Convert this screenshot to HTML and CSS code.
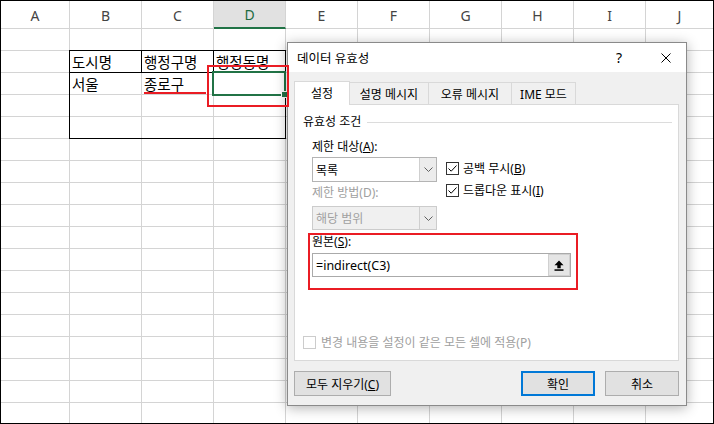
FILE: index.html
```html
<!DOCTYPE html>
<html lang="ko">
<head>
  <meta charset="UTF-8" />
  <title>데이터 유효성</title>
  <link rel="stylesheet" href="styles.css">
</head>
<body>
  <div class="screen">
    <div class="sheet">
      <div class="col-heads">
        <div class="col-head">A</div>
        <div class="col-head">B</div>
        <div class="col-head">C</div>
        <div class="col-head active">D</div>
        <div class="col-head">E</div>
        <div class="col-head">F</div>
        <div class="col-head">G</div>
        <div class="col-head">H</div>
        <div class="col-head">I</div>
        <div class="col-head">J</div>
      </div>
      <div class="cells">
        <div class="tbl">
          <div class="tc th">도시명</div>
          <div class="tc th">행정구명</div>
          <div class="tc th last">행정동명</div>
          <div class="tc">서울</div>
          <div class="tc">종로구</div>
          <div class="tc"></div>
        </div>
      </div>
    </div>

    <div class="cell-cursor"><span class="fill-handle"></span></div>

    <div class="dialog">
      <div class="titlebar">
        <span class="title">데이터 유효성</span>
        <span class="help">?</span>
        <svg class="close" width="10" height="10" viewBox="0 0 10 10">
          <path d="M0.5 0.5 L9.5 9.5 M9.5 0.5 L0.5 9.5" stroke="#000" stroke-width="1" fill="none"/>
        </svg>
      </div>
      <div class="dialog-body">
        <div class="tabs">
          <div class="tab selected">설정</div>
          <div class="tab tab-w79">설명 메시지</div>
          <div class="tab tab-w83">오류 메시지</div>
          <div class="tab tab-w64">IME 모드</div>
        </div>
        <div class="panel">
          <div class="group">
            <span>유효성 조건</span>
            <span class="group-line"></span>
          </div>

          <div class="fields">
            <div class="col-left">
              <div class="label">제한 대상(<u>A</u>):</div>
              <div class="select sel-allow">
                <span class="select-value">목록</span>
                <span class="select-arrow">
                  <svg width="9" height="5" viewBox="0 0 9 5"><path d="M0.5 0.5 L4.5 4.5 L8.5 0.5" stroke="#606060" fill="none"/></svg>
                </span>
              </div>
              <div class="label disabled lbl-data">제한 방법(D):</div>
              <div class="select disabled sel-data">
                <span class="select-value">해당 범위</span>
                <span class="select-arrow">
                  <svg width="9" height="5" viewBox="0 0 9 5"><path d="M0.5 0.5 L4.5 4.5 L8.5 0.5" stroke="#606060" fill="none"/></svg>
                </span>
              </div>
            </div>
            <div class="col-right">
              <div class="check-row">
                <span class="checkbox">
                  <svg width="11" height="11" viewBox="0 0 11 11"><path d="M1.5 5.5 L4.2 8.2 L9.5 2.5" stroke="#000" fill="none"/></svg>
                </span>
                <span>공백 무시(<u>B</u>)</span>
              </div>
              <div class="check-row">
                <span class="checkbox">
                  <svg width="11" height="11" viewBox="0 0 11 11"><path d="M1.5 5.5 L4.2 8.2 L9.5 2.5" stroke="#000" fill="none"/></svg>
                </span>
                <span>드롭다운 표시(<u>I</u>)</span>
              </div>
            </div>
          </div>

          <div class="source">
            <div class="label">원본(<u>S</u>):</div>
            <div class="source-input">
              <span class="source-value">=indirect(C3)</span>
              <span class="ref-btn">
                <svg width="10" height="11" viewBox="0 0 10 11">
                  <path d="M5 0.5 L9.5 5.3 L6.7 5.3 L6.7 8.3 L3.3 8.3 L3.3 5.3 L0.5 5.3 Z" fill="#000"/>
                  <rect x="0.5" y="9.3" width="9" height="1.5" fill="#000"/>
                </svg>
              </span>
            </div>
          </div>

          <div class="apply-row">
            <span class="checkbox off"></span>
            <span>변경 내용을 설정이 같은 모든 셀에 적용(P)</span>
          </div>
        </div>
        <div class="actions">
          <button type="button" class="btn btn-clear">모두 지우기(<u>C</u>)</button>
          <button type="button" class="btn btn-ok">확인</button>
          <button type="button" class="btn btn-cancel">취소</button>
        </div>
      </div>
    </div>

    <!-- red annotations -->
    <div class="mark mark-cell"></div>
    <div class="mark-underline"></div>
    <div class="mark mark-source"></div>
  </div>
</body>
</html>
```

FILE: styles.css
```css
* {
  box-sizing: border-box;
}
body {
  margin: 0;
  background: #fff;
}
.screen {
  position: relative;
  width: 714px;
  height: 424px;
  overflow: hidden;
}
.sheet {
  width: 714px;
  height: 424px;
  border: 1px solid #000;
  display: flex;
  flex-direction: column;
  overflow: hidden;
}
.col-heads {
  display: grid;
  grid-template-columns: 69px repeat(8, 72px) 1fr;
  height: 28px;
  flex: none;
}
.col-head {
  border-right: 1px solid #d4d4d4;
  border-bottom: 1px solid #d4d4d4;
  font-family: "Noto Sans", sans-serif;
  font-size: 14px;
  color: #444;
  display: flex;
  align-items: center;
  justify-content: center;
  padding-top: 1px;
}
.col-head:last-child {
  border-right: none;
}
.col-head.active {
  background: #e1e1e1;
  border-bottom: 2px solid #217346;
  color: #1d6b40;
}
.cells {
  flex: 1;
  display: grid;
  grid-template-columns: 69px repeat(8, 72px) 1fr;
  grid-template-rows: repeat(18, 22px);
  background-image:
    linear-gradient(to left, #d4d4d4 1px, transparent 1px),
    linear-gradient(to top, #d4d4d4 1px, transparent 1px);
  background-size: 72px 100%, 100% 22px;
  background-position: 69px 0, 0 0;
}
.tbl {
  grid-column: 2 / 5;
  grid-row: 2 / 6;
  margin: -1px 0 0 -1px;
  border: 1px solid #000;
  display: grid;
  grid-template-columns: 72px 72px 1fr;
  grid-template-rows: 22px 22px 22px 1fr;
  font-family: "Noto Sans CJK KR", sans-serif;
  font-size: 14.5px;
  color: #000;
}
.tc {
  padding-left: 2px;
  line-height: 21px;
  white-space: nowrap;
  overflow: visible;
}
.tc.th {
  border-bottom: 1px solid #000;
  border-right: 1px solid #000;
}
.tc.th.last {
  border-right: none;
}
.cell-cursor {
  position: absolute;
  left: 212px;
  top: 71px;
  width: 74px;
  height: 25px;
  border: 2px solid #217346;
}
.fill-handle {
  position: absolute;
  right: -4px;
  bottom: -4px;
  width: 7px;
  height: 7px;
  background: #217346;
  border: 1px solid #fff;
}

/* dialog */
.dialog {
  position: absolute;
  left: 287px;
  top: 42px;
  width: 400px;
  height: 364px;
  border: 1px solid #8a8a8a;
  background: #f0f0f0;
  box-shadow: 0 2px 12px rgba(0,0,0,0.3);
  display: flex;
  flex-direction: column;
  font-family: "Noto Sans", "Noto Sans CJK KR", sans-serif;
  font-size: 12px;
  color: #000;
}
.titlebar {
  height: 29px;
  flex: none;
  background: #fff;
  display: flex;
  align-items: center;
  padding-left: 9px;
}
.title {
  font-size: 12.5px;
}
.help {
  margin-left: auto;
  width: 12px;
  text-align: center;
  font-size: 14px;
  margin-right: 36px;
}
.close {
  margin-right: 15px;
}
.dialog-body {
  flex: 1;
  display: flex;
  flex-direction: column;
  padding: 9px 7px 9px 6px;
}
.tabs {
  display: flex;
  align-items: flex-end;
  height: 23px;
  flex: none;
}
.tab {
  height: 22px;
  border-top: 1px solid #d9d9d9;
  border-right: 1px solid #d9d9d9;
  display: flex;
  align-items: center;
  justify-content: center;
  background: #f0f0f0;
}
.tab.selected {
  width: 56px;
  height: 24px;
  margin-bottom: -1px;
  background: #fff;
  border: 1px solid #d9d9d9;
  border-bottom: none;
  position: relative;
  z-index: 1;
  padding-bottom: 1px;
}
.tab-w79 { width: 79px; }
.tab-w83 { width: 83px; }
.tab-w64 { width: 64px; }
.panel {
  height: 257px;
  flex: none;
  background: #fff;
  border: 1px solid #d9d9d9;
  display: flex;
  flex-direction: column;
}
.group {
  margin-top: 9px;
  height: 16px;
  line-height: 16px;
  padding-left: 8px;
  padding-right: 6px;
  display: flex;
  align-items: center;
}
.group-line {
  flex: 1;
  height: 1px;
  background: #dcdcdc;
  margin-left: 6px;
}
.fields {
  display: flex;
  margin-top: 9px;
  padding-left: 17px;
}
.col-left {
  width: 125px;
}
.label {
  height: 16px;
  line-height: 16px;
  white-space: nowrap;
}
.disabled {
  color: #a0a0a0;
}
.select {
  display: flex;
  height: 25px;
  border: 1px solid #b4b4b4;
  background: #fff;
}
.sel-allow {
  margin-top: 2px;
}
.lbl-data {
  margin-top: 3px;
}
.sel-data {
  margin-top: 5px;
  height: 24px;
  background: #f0f0f0;
  border-color: #cccccc;
}
.select-value {
  flex: 1;
  padding-left: 3px;
  display: flex;
  align-items: center;
}
.select-arrow {
  width: 17px;
  border-left: 1px solid #cfcfcf;
  background: #ececec;
  display: flex;
  align-items: center;
  justify-content: center;
}
.col-right {
  margin-left: 9px;
  padding-top: 21px;
  display: flex;
  flex-direction: column;
  gap: 6px;
}
.check-row {
  display: flex;
  align-items: center;
  height: 16px;
  white-space: nowrap;
}
.checkbox {
  width: 13px;
  height: 13px;
  border: 1px solid #333;
  background: #fff;
  display: flex;
  align-items: center;
  justify-content: center;
  margin-right: 4px;
  flex: none;
}
.checkbox.off {
  border-color: #cccccc;
  margin-right: 5px;
}
.source {
  margin-top: 4px;
  padding-left: 17px;
}
.source-input {
  margin-top: 3px;
  width: 259px;
  height: 24px;
  border: 1px solid #aaaaaa;
  display: flex;
}
.source-value {
  flex: 1;
  padding-left: 3px;
  display: flex;
  align-items: center;
  font-size: 12.5px;
}
.ref-btn {
  width: 22px;
  background: #e5e5e5;
  border: 1px solid #d0d0d0;
  display: flex;
  align-items: center;
  justify-content: center;
}
.apply-row {
  margin-top: auto;
  margin-bottom: 10px;
  padding-left: 8px;
  height: 16px;
  display: flex;
  align-items: center;
  color: #a0a0a0;
  white-space: nowrap;
}
.actions {
  margin-top: 10px;
  display: flex;
  height: 25px;
}
.btn {
  height: 25px;
  width: 74px;
  padding: 0;
  border: 1px solid #adadad;
  background: #e1e1e1;
  font-family: "Noto Sans", "Noto Sans CJK KR", sans-serif;
  font-size: 12px;
  color: #000;
}
.btn-clear {
  width: 97px;
}
.btn-ok {
  margin-left: auto;
  border: 2px solid #0078d7;
}
.btn-cancel {
  margin-left: 10px;
}

/* red annotations */
.mark {
  position: absolute;
  border: 2px solid #ea1c24;
}
.mark-cell {
  left: 207px;
  top: 65px;
  width: 82px;
  height: 42px;
}
.mark-source {
  left: 308px;
  top: 233px;
  width: 270px;
  height: 57px;
}
.mark-underline {
  position: absolute;
  left: 144px;
  top: 92px;
  width: 62px;
  height: 2px;
  background: #ea1c24;
}
```
